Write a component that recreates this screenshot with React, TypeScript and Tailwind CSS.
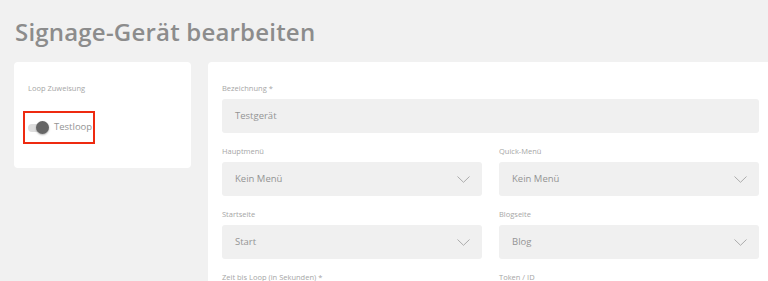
import React from "react";

const Chevron = () => (
  <svg width="13" height="7" viewBox="0 0 13 7" fill="none" className="shrink-0">
    <path d="M0.5 0.5 L6.5 6.3 L12.5 0.5" stroke="#ababab" strokeWidth="1" />
  </svg>
);

const Label = ({ children }: { children: React.ReactNode }) => (
  <div className="h-[12px] text-[7.5px] leading-[12px] text-[#a6a6a6] mb-[5px]">{children}</div>
);

const Input = ({ value }: { value: string }) => (
  <div className="h-[34px] rounded-[3px] bg-[#f0f0f0] flex items-center pl-[13px] text-[9.5px] text-[#949494]">
    {value}
  </div>
);

const Select = ({ value }: { value: string }) => (
  <div className="h-[34px] rounded-[3px] bg-[#f0f0f0] flex items-center justify-between pl-[13px] pr-[12px] text-[9.5px] text-[#949494]">
    <span>{value}</span>
    <Chevron />
  </div>
);

export default function App() {
  return (
    <div
      className="w-[768px] h-[281px] overflow-hidden bg-[#f1f1f1]"
      style={{ fontFamily: '"Open Sans", "Noto Sans", sans-serif' }}
    >
      <div className="pl-[14px] pt-[16px]">
        <h1 className="h-[32px] text-[24px] leading-[32px] font-semibold text-[#8c8c8c] pl-[1px] tracking-[0.2px]">
          Signage-Gerät bearbeiten
        </h1>
        <div className="flex gap-[17px] mt-[14px] items-start">
          <div className="w-[177px] shrink-0 bg-white rounded-[4px] pt-[20px] pb-[24px]">
            <div className="px-[14px]">
              <div className="h-[12px] text-[7.5px] leading-[12px] text-[#a6a6a6]">Loop Zuweisung</div>
            </div>
            <div className="ml-[9px] mt-[17px] w-[72px] h-[33px] border-2 border-[#ee2a10] flex items-center pl-[3px]">
              <div className="relative w-[20px] h-[8px] rounded-full bg-[#dedede] shrink-0">
                <div className="absolute left-[8px] top-[-3px] w-[13px] h-[13px] rounded-full bg-[#666666] shadow-[0_1px_2px_rgba(0,0,0,0.3)]" />
              </div>
              <span className="ml-[6px] text-[9.5px] text-[#949494]">Testloop</span>
            </div>
          </div>
          <div className="w-[565px] shrink-0 bg-white rounded-[4px] pt-[20px] px-[14px]">
            <Label>Bezeichnung *</Label>
            <Input value="Testgerät" />
            <div className="grid grid-cols-2 gap-x-[17px] mt-[12px]">
              <div>
                <Label>Hauptmenü</Label>
                <Select value="Kein Menü" />
              </div>
              <div>
                <Label>Quick-Menü</Label>
                <Select value="Kein Menü" />
              </div>
            </div>
            <div className="grid grid-cols-2 gap-x-[17px] mt-[12px]">
              <div>
                <Label>Startseite</Label>
                <Select value="Start" />
              </div>
              <div>
                <Label>Blogseite</Label>
                <Select value="Blog" />
              </div>
            </div>
            <div className="grid grid-cols-2 gap-x-[17px] mt-[12px]">
              <div>
                <Label>Zeit bis Loop (in Sekunden) *</Label>
                <Input value="" />
              </div>
              <div>
                <Label>Token / ID</Label>
                <Input value="" />
              </div>
            </div>
          </div>
        </div>
      </div>
    </div>
  );
}
